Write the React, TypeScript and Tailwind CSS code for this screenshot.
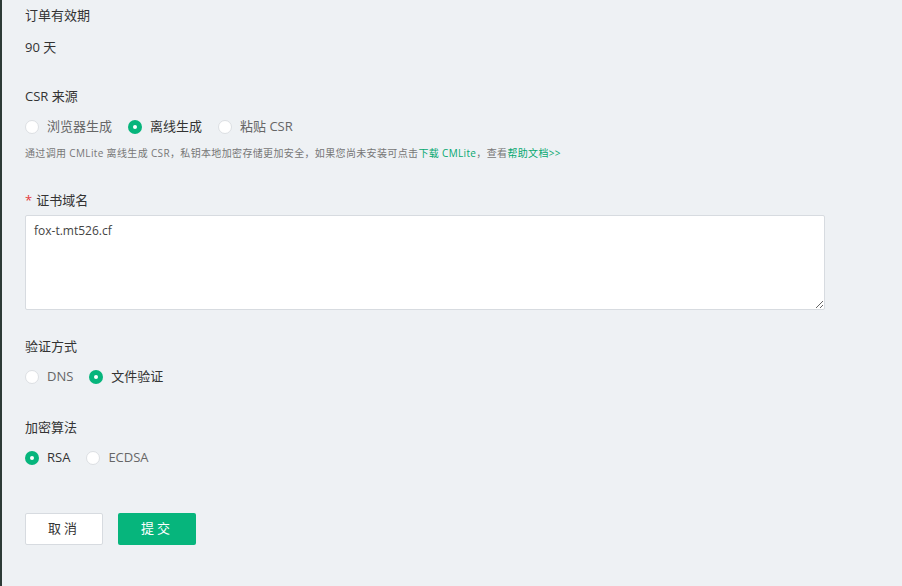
import React, { useState } from 'react';

const font = { fontFamily: '"Open Sans", "Noto Sans CJK SC", sans-serif' };

function Radio({ checked, label, onClick }: { checked: boolean; label: string; onClick: () => void }) {
  return (
    <label onClick={onClick} className="flex items-center gap-[8px] cursor-pointer mr-[16px]">
      <span className={`w-[14px] h-[14px] rounded-full flex items-center justify-center ${checked ? 'bg-[#06b57c]' : 'bg-white border border-[#dcdfe3]'}`}>
        {checked && <span className="w-[4px] h-[4px] rounded-full bg-white" />}
      </span>
      <span className={`text-[13px] ${checked ? 'text-[#333]' : 'text-[#666]'}`}>{label}</span>
    </label>
  );
}

export default function App() {
  const [csr, setCsr] = useState('offline');
  const [verify, setVerify] = useState('file');
  const [algo, setAlgo] = useState('rsa');

  return (
    <div className="w-[902px] h-[586px] bg-[#eef1f4] border-l-2 border-[#2d3a36] overflow-hidden" style={font}>
      <div className="pl-[23px] pt-[5px]">
        <div className="text-[13px] text-[#333] leading-[20px]">订单有效期</div>
        <div className="text-[13px] text-[#333] leading-[20px] mt-[12px]">90 天</div>

        <div className="text-[13px] text-[#333] leading-[20px] mt-[29px]">CSR 来源</div>
        <div className="flex items-center mt-[11px] h-[20px]">
          <Radio checked={csr === 'browser'} label="浏览器生成" onClick={() => setCsr('browser')} />
          <Radio checked={csr === 'offline'} label="离线生成" onClick={() => setCsr('offline')} />
          <Radio checked={csr === 'paste'} label="粘贴 CSR" onClick={() => setCsr('paste')} />
        </div>
        <div className="text-[10px] text-[#777] mt-[9px] leading-[14px] tracking-[0.35px]">
          通过调用 CMLite 离线生成 CSR，私钥本地加密存储更加安全，如果您尚未安装可点击<span className="text-[#06a870]">下载 CMLite</span>，查看<span className="text-[#06a870]">帮助文档&gt;&gt;</span>
        </div>

        <div className="text-[13px] text-[#333] leading-[20px] mt-[30px]"><span className="text-[#e4393c] mr-[4px]">*</span>证书域名</div>
        <textarea
          defaultValue="fox-t.mt526.cf"
          className="block mt-[5px] w-[800px] h-[95px] bg-white border border-[#d7dbe0] rounded-[2px] px-[8px] py-[6px] text-[12px] text-[#444] outline-none"
        />

        <div className="text-[13px] text-[#333] leading-[20px] mt-[26px]">验证方式</div>
        <div className="flex items-center mt-[11px] h-[20px]">
          <Radio checked={verify === 'dns'} label="DNS" onClick={() => setVerify('dns')} />
          <Radio checked={verify === 'file'} label="文件验证" onClick={() => setVerify('file')} />
        </div>

        <div className="text-[13px] text-[#333] leading-[20px] mt-[30px]">加密算法</div>
        <div className="flex items-center mt-[11px] h-[20px]">
          <Radio checked={algo === 'rsa'} label="RSA" onClick={() => setAlgo('rsa')} />
          <Radio checked={algo === 'ecdsa'} label="ECDSA" onClick={() => setAlgo('ecdsa')} />
        </div>

        <div className="flex gap-[15px] mt-[45px]">
          <button className="w-[78px] h-[32px] bg-white border border-[#d7dbe0] rounded-[2px] text-[13px] text-[#333] tracking-[3px]">取消</button>
          <button className="w-[78px] h-[32px] bg-[#06b57c] rounded-[2px] text-[13px] text-white tracking-[3px]">提交</button>
        </div>
      </div>
    </div>
  );
}
